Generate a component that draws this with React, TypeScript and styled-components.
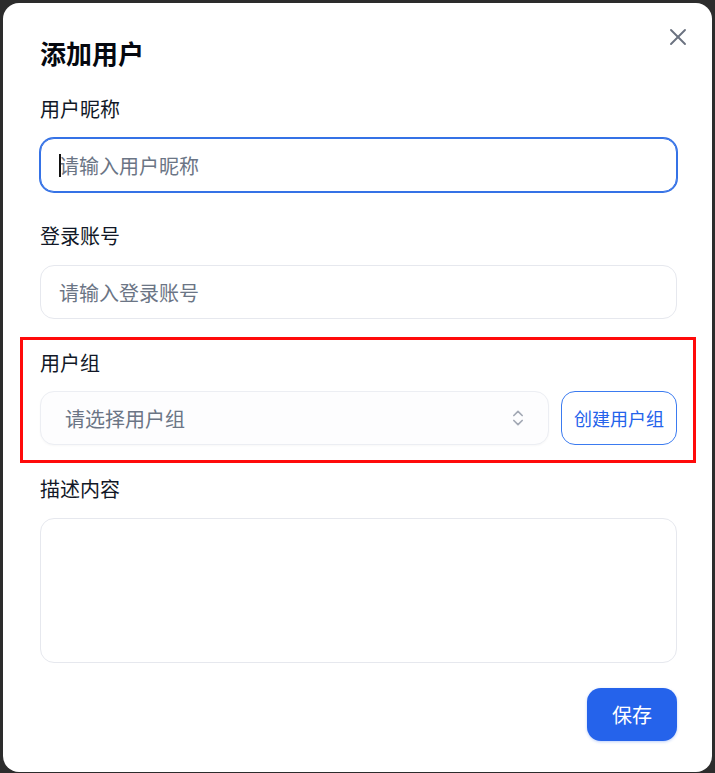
import React from "react";
import styled, { createGlobalStyle } from "styled-components";

const Global = createGlobalStyle`
  html, body { margin: 0; padding: 0; }
  body {
    background: #2c2c2c;
    font-family: "Noto Sans CJK SC", "Noto Sans", sans-serif;
    overflow: hidden;
  }
  * { box-sizing: border-box; }
`;

const Page = styled.div`
  width: 715px;
  height: 773px;
  padding: 3px 3px 0 3px;
`;

const Dialog = styled.div`
  position: relative;
  width: 709px;
  height: 769px;
  background: #ffffff;
  border-radius: 16px;
  padding: 32px 35px 0 37px;
  display: flex;
  flex-direction: column;
`;

const Title = styled.h2`
  margin: 0 0 24px 0;
  font-size: 26px;
  line-height: 36px;
  font-weight: 700;
  color: #05080f;
`;

const CloseButton = styled.button`
  position: absolute;
  top: 22px;
  right: 22px;
  width: 24px;
  height: 24px;
  padding: 0;
  border: none;
  background: transparent;
  display: flex;
  align-items: center;
  justify-content: center;
  color: #6b7280;
`;

const Form = styled.div`
  display: flex;
  flex-direction: column;
  gap: 30px;
`;

const Field = styled.div<{ $highlight?: boolean }>`
  position: relative;
  display: flex;
  flex-direction: column;
  gap: ${(p) => (p.$highlight ? "14px" : "15px")};
  ${(p) =>
    p.$highlight &&
    `
    &::after {
      content: "";
      position: absolute;
      top: -12px;
      left: -20px;
      right: -19px;
      bottom: -18px;
      border: 3px solid #ff0a0a;
      pointer-events: none;
    }
  `}
`;

const Label = styled.label`
  font-size: 20px;
  line-height: 28px;
  color: #111827;
`;

const InputWrap = styled.div`
  position: relative;
`;

const Input = styled.input<{ $focused?: boolean }>`
  width: 100%;
  height: 54px;
  border-radius: 14px;
  border: 1px solid ${(p) => (p.$focused ? "#3572e6" : "#e6e8ee")};
  box-shadow: ${(p) => (p.$focused ? "0 0 0 1px #3572e6" : "none")};
  padding: 0 18px;
  font-family: inherit;
  font-size: 20px;
  color: #111827;
  background: #fff;
  outline: none;
  caret-color: transparent;
  &::placeholder {
    color: #6b7585;
  }
`;

const Caret = styled.span`
  position: absolute;
  left: 19px;
  top: 16px;
  width: 2px;
  height: 23px;
  background: #111;
`;

const Row = styled.div`
  display: flex;
  gap: 12px;
`;

const Select = styled.div`
  flex: 1;
  height: 54px;
  border-radius: 14px;
  border: 1px solid #eceef3;
  background: #fdfdfe;
  box-shadow: 0 1px 2px rgba(0, 0, 0, 0.03);
  padding: 0 20px 0 24px;
  display: flex;
  align-items: center;
  justify-content: space-between;
  font-size: 20px;
  color: #6b7585;
`;

const OutlineButton = styled.button`
  height: 54px;
  width: 116px;
  border-radius: 14px;
  border: 1px solid #3b7bf0;
  background: #fff;
  color: #2563eb;
  font-family: inherit;
  font-size: 18px;
  padding: 0;
`;

const TextArea = styled.textarea`
  width: 100%;
  height: 145px;
  border-radius: 14px;
  border: 1px solid #e6e8ee;
  resize: none;
  outline: none;
  padding: 12px 18px;
  font-family: inherit;
  font-size: 20px;
`;

const Footer = styled.div`
  display: flex;
  justify-content: flex-end;
  margin-top: 25px;
`;

const PrimaryButton = styled.button`
  width: 90px;
  height: 53px;
  border-radius: 14px;
  border: none;
  background: #2563eb;
  color: #fff;
  font-family: inherit;
  font-size: 20px;
  box-shadow: 0 1px 3px rgba(37, 99, 235, 0.3);
`;

const ChevronsUpDown = () => (
  <svg width="20" height="20" viewBox="0 0 24 24" fill="none" stroke="#a3a9b5" strokeWidth="2" strokeLinecap="round" strokeLinejoin="round">
    <path d="m7 15 5 5 5-5" />
    <path d="m7 9 5-5 5 5" />
  </svg>
);

const XIcon = () => (
  <svg width="18" height="18" viewBox="0 0 18 18" fill="none" stroke="currentColor" strokeWidth="1.9" strokeLinecap="round">
    <path d="M2 2 L16 16" />
    <path d="M16 2 L2 16" />
  </svg>
);

export default function App() {
  return (
    <>
      <Global />
      <Page>
        <Dialog>
          <Title>添加用户</Title>
          <CloseButton aria-label="关闭">
            <XIcon />
          </CloseButton>
          <Form>
            <Field>
              <Label>用户昵称</Label>
              <InputWrap>
                <Input $focused placeholder="请输入用户昵称" />
                <Caret />
              </InputWrap>
            </Field>
            <Field>
              <Label>登录账号</Label>
              <Input placeholder="请输入登录账号" />
            </Field>
            <Field $highlight>
              <Label>用户组</Label>
              <Row>
                <Select>
                  <span>请选择用户组</span>
                  <ChevronsUpDown />
                </Select>
                <OutlineButton>创建用户组</OutlineButton>
              </Row>
            </Field>
            <Field>
              <Label>描述内容</Label>
              <TextArea />
            </Field>
          </Form>
          <Footer>
            <PrimaryButton>保存</PrimaryButton>
          </Footer>
        </Dialog>
      </Page>
    </>
  );
}
